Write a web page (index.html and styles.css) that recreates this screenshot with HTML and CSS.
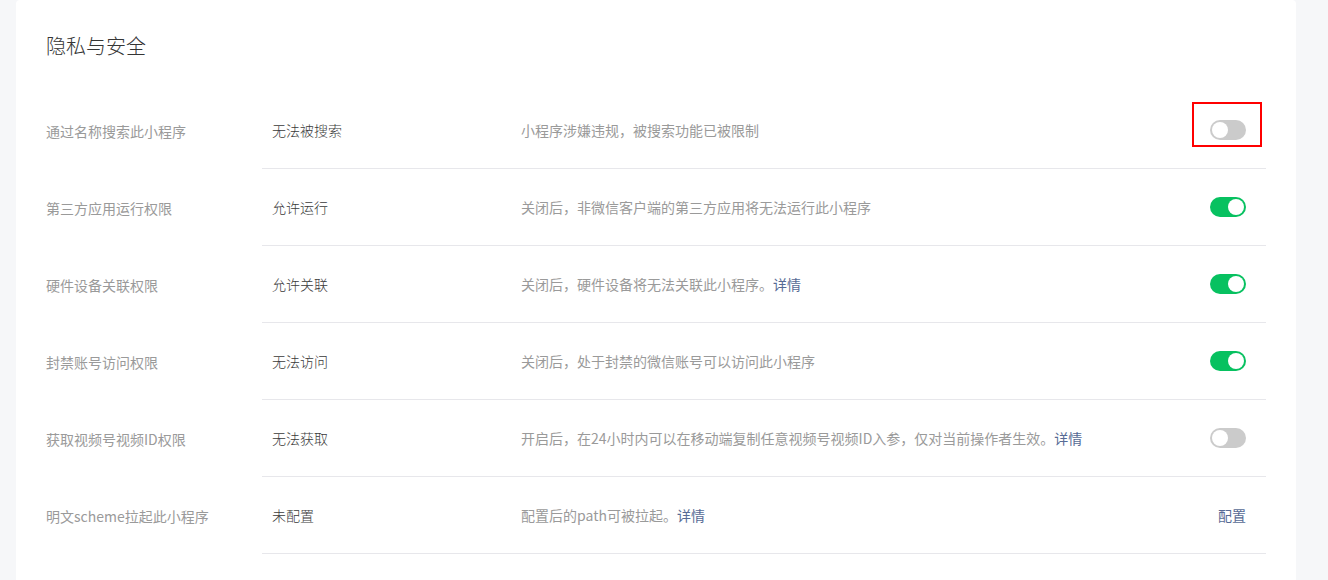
FILE: index.html
```html
<!DOCTYPE html>
<html lang="zh-CN">
<head>
  <meta charset="UTF-8" />
  <title>隐私与安全</title>
  <link rel="stylesheet" href="styles.css">
</head>
<body>
<div class="card">
  <h2 class="card-title">隐私与安全</h2>

  <div class="setting-row">
    <div class="setting-label">通过名称搜索此小程序</div>
    <div class="setting-body">
      <div class="setting-value">无法被搜索</div>
      <div class="setting-desc">小程序涉嫌违规，被搜索功能已被限制</div>
      <div class="setting-action">
        <span class="switch highlighted"><span class="knob"></span></span>
      </div>
    </div>
  </div>

  <div class="setting-row">
    <div class="setting-label">第三方应用运行权限</div>
    <div class="setting-body">
      <div class="setting-value">允许运行</div>
      <div class="setting-desc">关闭后，非微信客户端的第三方应用将无法运行此小程序</div>
      <div class="setting-action">
        <span class="switch on"><span class="knob"></span></span>
      </div>
    </div>
  </div>

  <div class="setting-row">
    <div class="setting-label">硬件设备关联权限</div>
    <div class="setting-body">
      <div class="setting-value">允许关联</div>
      <div class="setting-desc">关闭后，硬件设备将无法关联此小程序。<a class="link" href="#">详情</a></div>
      <div class="setting-action">
        <span class="switch on"><span class="knob"></span></span>
      </div>
    </div>
  </div>

  <div class="setting-row">
    <div class="setting-label">封禁账号访问权限</div>
    <div class="setting-body">
      <div class="setting-value">无法访问</div>
      <div class="setting-desc">关闭后，处于封禁的微信账号可以访问此小程序</div>
      <div class="setting-action">
        <span class="switch on"><span class="knob"></span></span>
      </div>
    </div>
  </div>

  <div class="setting-row">
    <div class="setting-label">获取视频号视频ID权限</div>
    <div class="setting-body">
      <div class="setting-value">无法获取</div>
      <div class="setting-desc">开启后，在24小时内可以在移动端复制任意视频号视频ID入参，仅对当前操作者生效。<a class="link" href="#">详情</a></div>
      <div class="setting-action">
        <span class="switch"><span class="knob"></span></span>
      </div>
    </div>
  </div>

  <div class="setting-row">
    <div class="setting-label">明文scheme拉起此小程序</div>
    <div class="setting-body">
      <div class="setting-value">未配置</div>
      <div class="setting-desc">配置后的path可被拉起。<a class="link" href="#">详情</a></div>
      <div class="setting-action">
        <a class="link" href="#">配置</a>
      </div>
    </div>
  </div>
</div>
</body>
</html>
```

FILE: styles.css
```css
body {
  margin: 0;
  background: #f6f7f9;
  font-family: "Noto Sans CJK SC", "Liberation Sans", sans-serif;
  font-size: 14px;
  color: #353535;
}

.card {
  margin: 0 32px 0 16px;
  background: #fff;
  border-radius: 4px;
  padding: 32px 30px 40px;
  min-height: 560px;
  box-sizing: border-box;
}

.card-title {
  margin: 0 0 32px;
  font-size: 20px;
  font-weight: 300;
  line-height: 28px;
  color: #353535;
}

.setting-row {
  display: flex;
  height: 77px;
}

.setting-label {
  width: 216px;
  flex-shrink: 0;
  display: flex;
  align-items: center;
  color: #9a9a9a;
}

.setting-body {
  flex: 1;
  display: flex;
  align-items: center;
  border-bottom: 1px solid #e7e7eb;
}

.setting-value {
  width: 249px;
  flex-shrink: 0;
  padding-left: 10px;
  box-sizing: border-box;
  color: #3a3a3a;
  font-weight: 300;
}

.setting-desc {
  flex: 1;
  padding-left: 10px;
  color: #9a9a9a;
}

.setting-action {
  padding-right: 20px;
  display: flex;
  align-items: center;
}

.link {
  color: #576b95;
  text-decoration: none;
}

.switch {
  position: relative;
  display: inline-block;
  width: 36px;
  height: 20px;
  border-radius: 10px;
  background: #cbcbcb;
}

.switch .knob {
  position: absolute;
  top: 2px;
  left: 2px;
  width: 16px;
  height: 16px;
  border-radius: 50%;
  background: #fff;
}

.switch.on {
  background: #07c160;
}

.switch.on .knob {
  left: 18px;
}

.switch.highlighted::after {
  content: "";
  position: absolute;
  left: -18px;
  top: -18px;
  width: 66px;
  height: 41px;
  border: 2px solid #f00;
}
```
